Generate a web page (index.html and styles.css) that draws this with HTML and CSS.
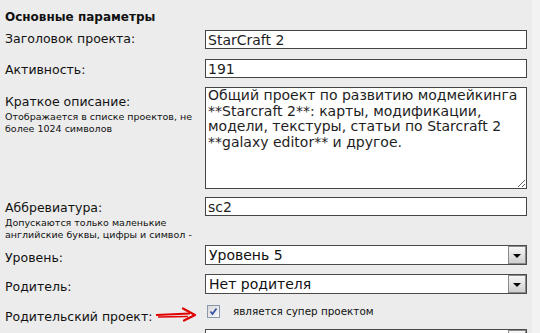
FILE: index.html
```html
<!DOCTYPE html>
<html lang="ru">
<head>
  <meta charset="UTF-8">
  <title>Основные параметры</title>
  <link rel="stylesheet" href="styles.css">
</head>
<body>
  <div class="form">
    <h3>Основные параметры</h3>

    <div class="row">
      <div class="label">Заголовок проекта:</div>
      <div class="field"><input type="text" value="StarCraft 2"></div>
    </div>

    <div class="row short">
      <div class="label lower">Активность:</div>
      <div class="field"><input type="text" value="191"></div>
    </div>

    <div class="row text-row">
      <div class="label desc">Краткое описание:
        <div class="hint">Отображается в списке проектов, не более 1024 символов</div>
      </div>
      <div class="field"><textarea>Общий проект по развитию модмейкинга **Starcraft 2**: карты, модификации, модели, текстуры, статьи по Starcraft 2 **galaxy editor** и другое.</textarea></div>
    </div>

    <div class="row abbr">
      <div class="label lower">Аббревиатура:
        <div class="hint">Допускаются только маленькие английские буквы, цифры и символ -</div>
      </div>
      <div class="field"><input type="text" value="sc2"></div>
    </div>

    <div class="row tight">
      <div class="label sel">Уровень:</div>
      <div class="field">
        <div class="select"><span>Уровень 5</span><b class="drop"></b></div>
      </div>
    </div>

    <div class="row flush">
      <div class="label sel">Родитель:</div>
      <div class="field">
        <div class="select"><span>Нет родителя</span><b class="drop"></b></div>
      </div>
    </div>

    <div class="row check-row">
      <div class="label">Родительский проект:
        <svg class="arrow" width="42" height="16" viewBox="0 0 42 16">
          <path d="M1 9 L35 7.5" stroke="#e00000" stroke-width="2" fill="none"/>
          <path d="M3 11 L33 10.5" stroke="#e00000" stroke-width="1.6" fill="none"/>
          <path d="M28 2.5 L40 9 L29 14.5" stroke="#e00000" stroke-width="2.2" fill="none" stroke-linejoin="round" stroke-linecap="round"/>
        </svg>
      </div>
      <div class="field">
        <label class="check">
          <span class="box">
            <svg width="11" height="11" viewBox="0 0 11 11"><path d="M2.5 5.5 L4.5 8 L8.5 2.5" stroke="#3a55a5" stroke-width="1.8" fill="none"/></svg>
          </span>
          является супер проектом
        </label>
      </div>
    </div>

    <div class="row tight">
      <div class="label"></div>
      <div class="field">
        <div class="select"><span></span><b class="drop"></b></div>
      </div>
    </div>
  </div>
</body>
</html>
```

FILE: styles.css
```css
body { margin: 0; background: #f2f2f2; font-family: Verdana, "DejaVu Sans", sans-serif; color: #111; overflow: hidden; }
.form { width: 532px; background: #ececec; padding: 10px 0 0 5px; box-sizing: border-box; }
h3 { margin: 0 0 6px; font-size: 12px; font-weight: bold; }
.row { display: flex; margin-bottom: 10px; }
.row.short { margin-bottom: 8px; }
.row.text-row { margin-bottom: 8px; }
.row.abbr { margin-bottom: 4px; }
.row.tight { margin-bottom: 7px; }
.row.flush { margin-bottom: 0; }
.label { position: relative; width: 200px; flex: none; font-size: 12.5px; line-height: 18px; padding-top: 0; }
.label.lower { padding-top: 2px; }
.label.desc { padding-top: 6px; }
.label.sel { padding-top: 4px; }
.hint { font-size: 9.5px; line-height: 12px; margin-top: 0; }
.field { width: 322px; }
input[type=text], textarea {
  display: block; width: 100%; box-sizing: border-box; margin: 0;
  border: 1px solid #444; background: #fff; color: #1e1e1e;
  font-family: Verdana, "DejaVu Sans", sans-serif; font-size: 14px;
}
input[type=text] { height: 19px; padding: 0 2px; }
textarea { height: 102px; padding: 0 2px; line-height: 15.7px; resize: vertical; }
.select { display: flex; height: 20px; box-sizing: border-box; border: 1px solid #4a4a4a; background: #fff; font-size: 14px; line-height: 18px; }
.select span { flex: 1; padding-left: 3px; }
.drop { width: 16px; border: 1px solid #8a8a8a; background: linear-gradient(#f6f6f6, #cfcfcf); position: relative; }
.drop::after { content: ""; position: absolute; left: 4px; top: 7px; border: 4px solid transparent; border-top: 4px solid #000; border-bottom: 0; }
.check-row { height: 33px; margin-bottom: 0; }
.check-row .label { padding-top: 12px; }
.arrow { position: absolute; left: 150px; top: 10px; }
.check { display: flex; align-items: center; gap: 13px; font-size: 10.4px; padding: 8px 0 0 2px; height: 14px; }
.box { width: 11px; height: 11px; border: 1px solid #8799aa; background: linear-gradient(135deg, #d8d8d8, #fafafa); display: flex; }
```
